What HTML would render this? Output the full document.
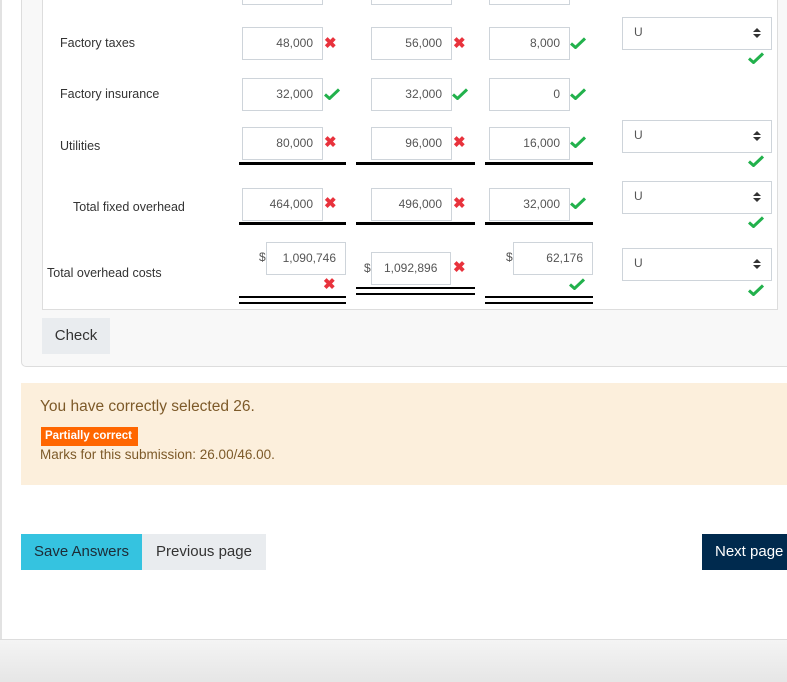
<!DOCTYPE html>
<html><head><meta charset="utf-8"><style>
*{box-sizing:border-box;margin:0;padding:0}
body{width:787px;height:682px;position:relative;overflow:hidden;background:#fff;font-family:"Liberation Sans",sans-serif;color:#333}
.a{position:absolute}
.inp{position:absolute;border:1px solid #ced4da;background:#fff;height:33px;width:81px;text-align:right;padding-right:9px;font-size:12px;line-height:31px;color:#555}
.lbl{position:absolute;font-size:12.5px;color:#333}
.x{position:absolute;color:#e8323c;font-size:15px;font-weight:bold;line-height:15px}
.c{position:absolute;width:16px;height:12px}
.ln{position:absolute;height:3px;background:#000}
.ln2{position:absolute;height:2px;background:#000}
.sel{position:absolute;left:622px;width:150px;height:33px;border:1px solid #ced4da;background:#fff;font-size:12px;color:#555;padding:7px 0 0 11px}
.sel:after{content:"";position:absolute;right:10px;top:10px;border:4px solid transparent;border-bottom:4px solid #333;border-top:0}
.sel:before{content:"";position:absolute;right:10px;top:16px;border:4px solid transparent;border-top:4px solid #333;border-bottom:0}
.d{position:absolute;font-size:12px;color:#555}
</style></head><body>
<div class="a" style="left:0;top:0;width:2px;height:640px;background:#e2e2e2"></div>
<div class="a" style="left:21px;top:-10px;width:770px;height:377px;background:#f8f8f8;border:1px solid #ddd;border-radius:0 0 0 5px"></div>
<div class="a" style="left:42px;top:-10px;width:736px;height:320px;background:#fff;border:1px solid #ddd"></div>

<div class="inp" style="left:242px;top:-28px"></div>
<div class="inp" style="left:371px;top:-28px"></div>
<div class="inp" style="left:489px;top:-28px"></div>

<svg width="0" height="0" style="position:absolute"><defs><symbol id="ck" viewBox="0 0 16 12"><path d="M1 6.5 L5.5 10.5 L15 1.5" stroke="#22b14c" stroke-width="3" fill="none"/></symbol></defs></svg>

<div class="lbl" style="left:60px;top:36px">Factory taxes</div>
<div class="inp" style="left:242px;top:27px">48,000</div><div class="x" style="left:324px;top:36px">✖</div>
<div class="inp" style="left:371px;top:27px">56,000</div><div class="x" style="left:453px;top:36px">✖</div>
<div class="inp" style="left:489px;top:27px">8,000</div><svg class="c" style="left:570px;top:37px"><use href="#ck"/></svg>
<div class="sel" style="top:17px">U</div><svg class="c" style="left:748px;top:52px"><use href="#ck"/></svg>

<div class="lbl" style="left:60px;top:87px">Factory insurance</div>
<div class="inp" style="left:242px;top:78px">32,000</div><svg class="c" style="left:324px;top:88px"><use href="#ck"/></svg>
<div class="inp" style="left:371px;top:78px">32,000</div><svg class="c" style="left:452px;top:88px"><use href="#ck"/></svg>
<div class="inp" style="left:489px;top:78px">0</div><svg class="c" style="left:570px;top:88px"><use href="#ck"/></svg>

<div class="lbl" style="left:60px;top:139px">Utilities</div>
<div class="inp" style="left:242px;top:127px">80,000</div><div class="x" style="left:324px;top:135px">✖</div>
<div class="inp" style="left:371px;top:127px">96,000</div><div class="x" style="left:453px;top:135px">✖</div>
<div class="inp" style="left:489px;top:127px">16,000</div><svg class="c" style="left:570px;top:136px"><use href="#ck"/></svg>
<div class="sel" style="top:120px">U</div><svg class="c" style="left:748px;top:155px"><use href="#ck"/></svg>
<div class="ln" style="left:239px;top:162px;width:107px"></div>
<div class="ln" style="left:356px;top:162px;width:119px"></div>
<div class="ln" style="left:485px;top:162px;width:108px"></div>

<div class="lbl" style="left:73px;top:200px">Total fixed overhead</div>
<div class="inp" style="left:242px;top:188px">464,000</div><div class="x" style="left:324px;top:196px">✖</div>
<div class="inp" style="left:371px;top:188px">496,000</div><div class="x" style="left:453px;top:196px">✖</div>
<div class="inp" style="left:489px;top:188px">32,000</div><svg class="c" style="left:570px;top:197px"><use href="#ck"/></svg>
<div class="sel" style="top:181px">U</div><svg class="c" style="left:748px;top:216px"><use href="#ck"/></svg>
<div class="ln" style="left:239px;top:222px;width:107px"></div>
<div class="ln" style="left:356px;top:222px;width:119px"></div>
<div class="ln" style="left:485px;top:222px;width:108px"></div>

<div class="lbl" style="left:47px;top:266px">Total overhead costs</div>
<div class="d" style="left:259px;top:250px">$</div>
<div class="inp" style="left:266px;top:242px;width:80px">1,090,746</div><div class="x" style="left:323px;top:277px">✖</div>
<div class="d" style="left:364px;top:261px">$</div>
<div class="inp" style="left:371px;top:252px;width:80px;text-align:left;padding-left:12px">1,092,896</div><div class="x" style="left:453px;top:260px">✖</div>
<div class="d" style="left:506px;top:250px">$</div>
<div class="inp" style="left:513px;top:242px;width:80px">62,176</div><svg class="c" style="left:569px;top:278px"><use href="#ck"/></svg>
<div class="sel" style="top:248px">U</div><svg class="c" style="left:748px;top:284px"><use href="#ck"/></svg>
<div class="ln2" style="left:239px;top:296px;width:107px"></div><div class="ln2" style="left:239px;top:302px;width:107px"></div>
<div class="ln2" style="left:356px;top:287px;width:119px"></div><div class="ln2" style="left:356px;top:293px;width:119px"></div>
<div class="ln2" style="left:485px;top:296px;width:108px"></div><div class="ln2" style="left:485px;top:302px;width:108px"></div>

<div class="a" style="left:42px;top:318px;width:68px;height:36px;background:#e9ecef;font-size:15px;line-height:36px;text-align:center;color:#333">Check</div>

<div class="a" style="left:21px;top:383px;width:766px;height:102px;background:#fcefdc"></div>
<div class="a" style="left:40px;top:398px;font-size:15.5px;color:#7d5a29">You have correctly selected 26.</div>
<div class="a" style="left:41px;top:427px;height:19px;width:97px;background:#f60;color:#fff;font-size:11.5px;font-weight:bold;line-height:19px;padding-left:4px">Partially correct</div>
<div class="a" style="left:40px;top:447px;font-size:13.5px;color:#7d5a29">Marks for this submission: 26.00/46.00.</div>

<div class="a" style="left:21px;top:534px;width:121px;height:36px;background:#35c3e0;font-size:15px;line-height:36px;text-align:center;color:#1d2b36">Save Answers</div>
<div class="a" style="left:142px;top:534px;width:124px;height:36px;background:#e9ecef;font-size:15px;line-height:36px;text-align:center;color:#333">Previous page</div>
<div class="a" style="left:702px;top:534px;width:90px;height:36px;background:#002a4e;font-size:15px;line-height:36px;padding-left:13px;color:#fff">Next page</div>

<div class="a" style="left:0;top:639px;width:787px;height:43px;border-top:1px solid #ddd;background:linear-gradient(#f4f4f4,#e6e6e6)"></div>
</body></html>
